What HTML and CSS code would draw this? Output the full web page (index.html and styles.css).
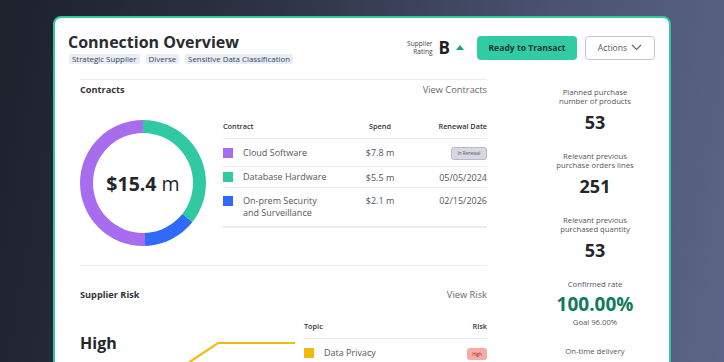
FILE: index.html
```html
<!DOCTYPE html>
<html lang="en">

<head>
    <meta charset="UTF-8">
    <meta name="viewport" content="width=device-width, initial-scale=1.0">
    <title>Connection Overview</title>
    <link rel="stylesheet" href="styles.css">
</head>

<body>
    <!-- card -->
    <div class="card">
        <!-- header -->
        <div class="head">
            <div class="head-left">
                <h1 class="title">Connection Overview</h1>
                <div class="tags">
                    <span class="tag">Strategic Supplier</span>
                    <span class="tag">Diverse</span>
                    <span class="tag">Sensitive Data Classification</span>
                </div>
            </div>
            <div class="head-right">
                <div class="rating">
                    <span class="rating-label">Supplier<br>Rating</span>
                    <span class="rating-grade">B</span>
                    <span class="rating-up"></span>
                </div>
                <button class="btn btn-primary">Ready to Transact</button>
                <button class="btn btn-outline">Actions
                    <svg width="11" height="7" viewBox="0 0 11 7"><path d="M1 1l4.5 4.5L10 1" fill="none" stroke="#666" stroke-width="1.2"/></svg>
                </button>
            </div>
        </div>

        <div class="body">
            <div class="main">
                <!-- contracts -->
                <section class="block contracts">
                    <div class="block-head">
                        <span class="block-title">Contracts</span>
                        <span class="block-link">View Contracts</span>
                    </div>
                    <div class="contracts-row">
                        <div class="donut">
                            <div class="donut-hole"><b>$15.4</b>&nbsp;m</div>
                        </div>
                        <div class="table ctable">
                            <div class="tr th">
                                <span>Contract</span>
                                <span class="c">Spend</span>
                                <span class="r">Renewal Date</span>
                            </div>
                            <div class="tr row1">
                                <span class="name"><i class="sq purple"></i>Cloud Software</span>
                                <span class="c">$7.8 m</span>
                                <span class="r"><em class="badge gray">In Renewal</em></span>
                            </div>
                            <div class="tr row2">
                                <span class="name"><i class="sq green"></i>Database Hardware</span>
                                <span class="c">$5.5 m</span>
                                <span class="r">05/05/2024</span>
                            </div>
                            <div class="tr row3">
                                <span class="name"><i class="sq blue"></i>On-prem Security<br>and Surveillance</span>
                                <span class="c">$2.1 m</span>
                                <span class="r">02/15/2026</span>
                            </div>
                        </div>
                    </div>
                </section>

                <!-- risk -->
                <section class="block risk">
                    <div class="block-head">
                        <span class="block-title">Supplier Risk</span>
                        <span class="block-link">View Risk</span>
                    </div>
                    <div class="risk-row">
                        <div class="risk-chart">
                            <div class="risk-level">High</div>
                            <svg class="risk-line" width="224" height="42" viewBox="0 0 224 42">
                                <polyline points="108,43 138,23 215,23" fill="none" stroke="#f3b90e" stroke-width="2.2"/>
                            </svg>
                        </div>
                        <div class="table rtable">
                            <div class="tr th">
                                <span>Topic</span>
                                <span class="r">Risk</span>
                            </div>
                            <div class="tr">
                                <span class="name"><i class="sq yellow"></i>Data Privacy</span>
                                <span class="r"><em class="badge red">High</em></span>
                            </div>
                        </div>
                    </div>
                </section>
            </div>

            <!-- stats -->
            <div class="stats">
                <div class="stat">
                    <div class="stat-label">Planned purchase<br>number of products</div>
                    <div class="stat-num">53</div>
                </div>
                <div class="stat">
                    <div class="stat-label">Relevant previous<br>purchase orders lines</div>
                    <div class="stat-num">251</div>
                </div>
                <div class="stat">
                    <div class="stat-label">Relevant previous<br>purchased quantity</div>
                    <div class="stat-num">53</div>
                </div>
                <div class="stat">
                    <div class="stat-label">Confirmed rate</div>
                    <div class="stat-num green-num">100.00%</div>
                    <div class="stat-label goal">Goal 96.00%</div>
                </div>
                <div class="stat">
                    <div class="stat-label">On-time delivery</div>
                </div>
            </div>
        </div>
    </div>
</body>

</html>
```

FILE: styles.css
```css
* {
    box-sizing: border-box;
}

html,
body {
    margin: 0;
    height: 100%;
    overflow: hidden;
}

body {
    font-family: "Open Sans", "Liberation Sans", sans-serif;
    color: #2b2c33;
    background: linear-gradient(100deg, #1d212c 0%, #2e3345 35%, #4a5270 70%, #5c6587 100%);
    padding: 16px 0 0 53px;
}

.card {
    width: 618px;
    height: 420px;
    background: #fff;
    border: 2px solid #2fc9a0;
    border-radius: 8px;
}

/* header */
.head {
    display: flex;
    justify-content: space-between;
    align-items: center;
    padding: 13px 14px 0 13px;
}

.title {
    margin: 0;
    font-size: 16px;
    line-height: 22px;
    font-weight: 700;
    color: #2a2b31;
}

.tags {
    display: flex;
    gap: 6px;
    margin-top: 1px;
    margin-left: 1px;
}

.tag {
    background: #e9edf7;
    color: #3a3f52;
    font-size: 7.9px;
    line-height: 10px;
    padding: 0 3px;
    border-radius: 2px;
}

.head-right {
    display: flex;
    align-items: center;
}

.rating {
    display: flex;
    align-items: center;
    margin-right: 13px;
}

.rating-label {
    font-size: 6.6px;
    line-height: 7.5px;
    text-align: right;
    color: #444;
    margin-right: 6px;
}

.rating-grade {
    font-size: 17px;
    font-weight: 700;
    line-height: 20px;
    color: #1f2026;
}

.rating-up {
    width: 0;
    height: 0;
    border-left: 4px solid transparent;
    border-right: 4px solid transparent;
    border-bottom: 5px solid #13a37c;
    margin-left: 6px;
}

.btn {
    height: 24px;
    border-radius: 4px;
    font-family: inherit;
    font-size: 8.6px;
    padding: 0;
    display: flex;
    align-items: center;
    justify-content: center;
    gap: 4px;
}

.btn-primary {
    width: 100px;
    background: #33cba5;
    border: 0;
    color: #1b3a33;
    font-weight: 700;
}

.btn-outline {
    width: 70px;
    margin-left: 8px;
    background: #fff;
    border: 1px solid #c6c6cc;
    color: #55565c;
}

/* body */
.body {
    display: flex;
    margin-top: 15px;
    padding-left: 25px;
}

.main {
    width: 407px;
}

.block {
    border-top: 1px solid #ebebf0;
}

.block-head {
    display: flex;
    justify-content: space-between;
    line-height: 14px;
    padding-top: 3px;
}

.block-title {
    font-size: 9.2px;
    font-weight: 700;
    color: #33343a;
}

.block-link {
    font-size: 9.3px;
    color: #66676d;
}

.contracts {
    padding-bottom: 19px;
}

.contracts-row {
    display: flex;
    align-items: flex-start;
    gap: 17px;
    margin-top: 23px;
}

.donut {
    width: 126px;
    height: 126px;
    border-radius: 50%;
    background: conic-gradient(#30c9a4 0deg 128.6deg, #2f6bf8 128.6deg 177.7deg, #a86cee 177.7deg 360deg);
    display: flex;
    align-items: center;
    justify-content: center;
    flex-shrink: 0;
}

.donut-hole {
    width: 100px;
    height: 100px;
    border-radius: 50%;
    background: #fff;
    display: flex;
    align-items: center;
    justify-content: center;
    font-size: 19.5px;
    color: #25262c;
}

.table {
    flex: 1;
}

.tr {
    display: grid;
    align-items: center;
    border-bottom: 1px solid #ebebf0;
    font-size: 9px;
    color: #55565c;
}

.ctable .tr {
    grid-template-columns: 127px 60px 77px;
}

.th {
    font-size: 7.3px;
    font-weight: 600;
    color: #33343a;
    line-height: 13px;
    padding-bottom: 5px;
}

.tr .c {
    text-align: center;
}

.tr .r {
    text-align: right;
}

.name {
    display: flex;
    align-items: center;
    line-height: 12px;
}

.sq {
    width: 10px;
    height: 10px;
    margin-right: 10px;
    flex-shrink: 0;
}

.purple { background: #a86cee; }
.green { background: #30c9a4; }
.blue { background: #2f6bf8; }
.yellow { background: #f3b90e; }

.row1 { height: 28px; }
.row2 { height: 21px; }
.row3 {
    height: 40px;
    align-items: start;
    padding-top: 7px;
    line-height: 12px;
    border-bottom-width: 2px;
}

.row3 .name {
    align-items: flex-start;
}

.row3 .sq {
    margin-top: 1px;
}

.badge {
    display: inline-block;
    font-style: normal;
    font-size: 4.5px;
    line-height: 11px;
    padding: 0 4px;
    border-radius: 3px;
}

.badge.gray {
    background: #d8d8e2;
    border: 1px solid #b9b9c6;
    color: #555;
    width: 36px;
    text-align: center;
}

.badge.red {
    background: #f8aaa5;
    color: #8a2a25;
    line-height: 12px;
    width: 20px;
    text-align: center;
    padding: 0;
}

/* risk */
.risk .block-head {
    padding-top: 22px;
}

.risk-row {
    display: flex;
    margin-top: 18px;
}

.risk-chart {
    width: 224px;
    position: relative;
}

.risk-level {
    font-size: 16px;
    font-weight: 700;
    line-height: 20px;
    margin-top: 13px;
    color: #25262c;
}

.risk-line {
    position: absolute;
    left: 0;
    top: 0;
}

.rtable .tr {
    grid-template-columns: 1fr auto;
}

.rtable .tr:not(.th) {
    border-bottom: 0;
    height: 28px;
}

/* stats */
.stats {
    flex: 1;
    margin-left: 34px;
    padding-top: 9px;
    display: flex;
    flex-direction: column;
    align-items: center;
    gap: 19px;
    text-align: center;
}

.stat-label {
    font-size: 7.7px;
    line-height: 9px;
    color: #55565c;
}

.stat-num {
    font-size: 18px;
    line-height: 22px;
    font-weight: 700;
    margin-top: 5px;
    color: #25262c;
}

.green-num {
    font-size: 19px;
    line-height: 21px;
    color: #0f7b5b;
}

.goal {
    margin-top: 3px;
}

.stat:last-child {
    margin-top: 1px;
}
```
